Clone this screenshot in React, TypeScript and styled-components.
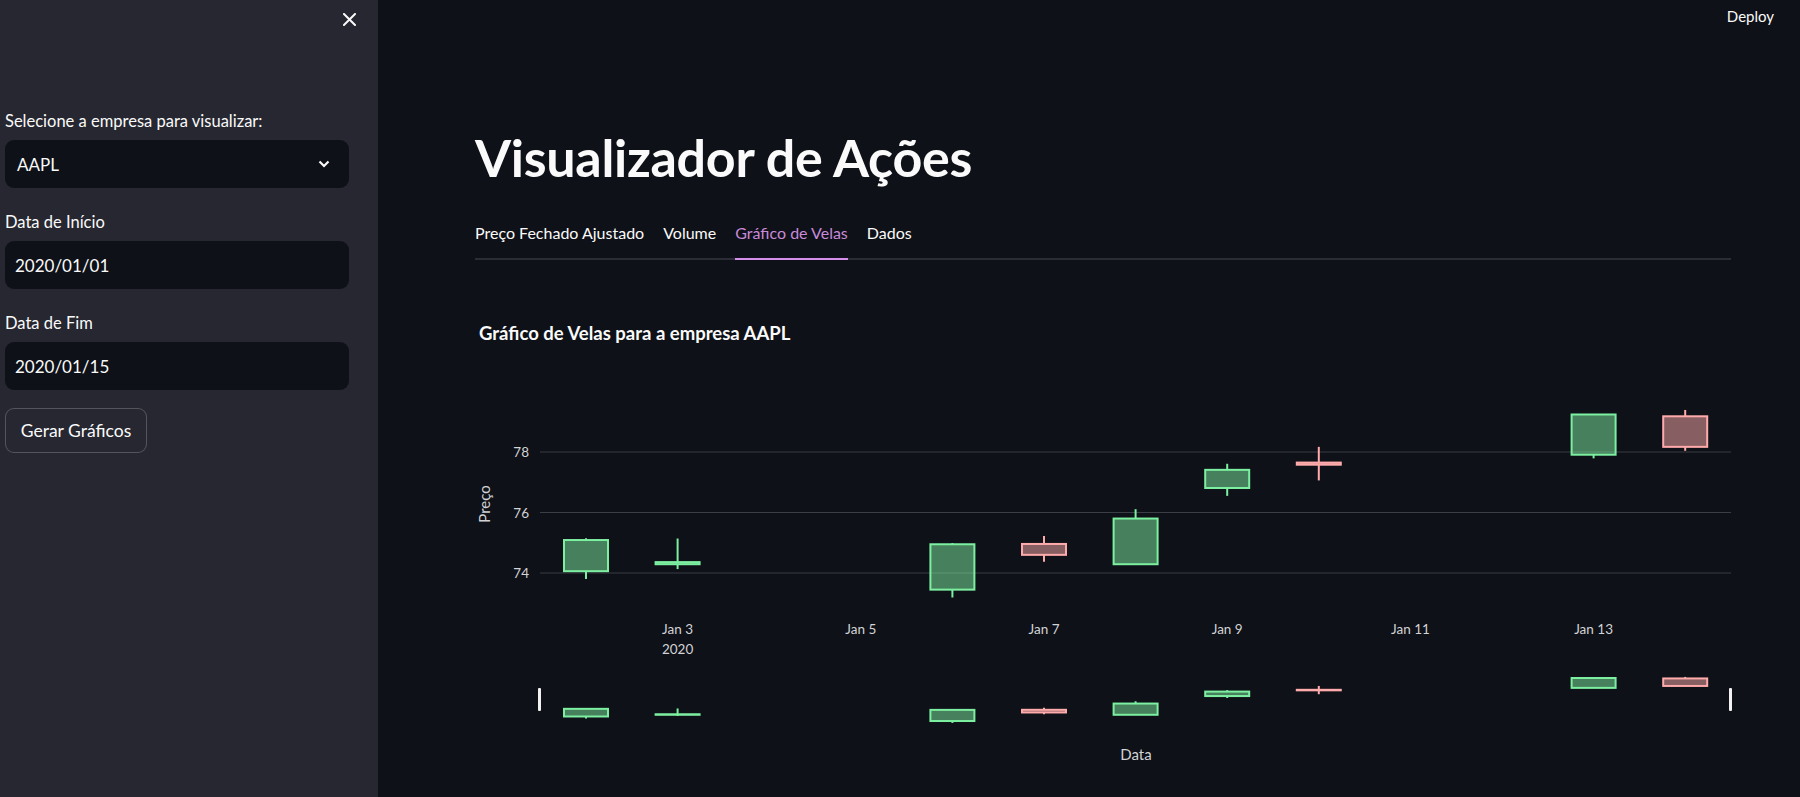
import styled, { createGlobalStyle } from 'styled-components';

interface ICandle {
	d: number;
	o: number;
	h: number;
	l: number;
	c: number;
}

/** AAPL 2020-01-02 .. 2020-01-14, d = days from Jan 2 */
const candles: ICandle[] = [
	{ d: 0, o: 74.06, h: 75.15, l: 73.8, c: 75.09 },
	{ d: 1, o: 74.29, h: 75.14, l: 74.13, c: 74.36 },
	{ d: 4, o: 73.45, h: 74.99, l: 73.19, c: 74.95 },
	{ d: 5, o: 74.96, h: 75.22, l: 74.37, c: 74.6 },
	{ d: 6, o: 74.29, h: 76.11, l: 74.29, c: 75.8 },
	{ d: 7, o: 76.81, h: 77.61, l: 76.55, c: 77.41 },
	{ d: 8, o: 77.65, h: 78.17, l: 77.06, c: 77.58 },
	{ d: 11, o: 77.91, h: 79.27, l: 77.79, c: 79.24 },
	{ d: 12, o: 79.18, h: 79.39, l: 78.04, c: 78.17 },
];

const tabs = ['Preço Fechado Ajustado', 'Volume', 'Gráfico de Velas', 'Dados'];
const xTicks = [
	{ d: 1, label: 'Jan 3' },
	{ d: 3, label: 'Jan 5' },
	{ d: 5, label: 'Jan 7' },
	{ d: 7, label: 'Jan 9' },
	{ d: 9, label: 'Jan 11' },
	{ d: 11, label: 'Jan 13' },
];

const UP = '#7defa1';
const DOWN = '#ffabab';
const CHART_W = 1256;
const CHART_H = 437;
const PLOT_L = 65;

const xOf = (d: number) => 111 + d * 91.6;
const yOf = (p: number) => 92 + (78 - p) * 30.25;
const ySlider = (p: number) => 318 + (79.24 - p) * 7.43;

/** one candle: wicks outside the body, body filled at half opacity */
const CandleMark = ({ candle, y }: { candle: ICandle; y: (p: number) => number }) => {
	const { d, o, h, l, c } = candle;
	const color = c >= o ? UP : DOWN;
	const cx = xOf(d);
	const top = y(Math.max(o, c));
	const bottom = y(Math.min(o, c));
	return (
		<g>
			{y(h) < top - 1 && <line x1={cx} x2={cx} y1={y(h)} y2={top} stroke={color} strokeWidth={2} />}
			{y(l) > bottom + 1 && <line x1={cx} x2={cx} y1={bottom} y2={y(l)} stroke={color} strokeWidth={2} />}
			<rect
				x={cx - 22}
				y={top}
				width={44}
				height={Math.max(bottom - top, 0.5)}
				fill={color}
				fillOpacity={0.5}
				stroke={color}
				strokeWidth={2}
			/>
		</g>
	);
};

const CandleChart = () => (
	<ChartSvg width={CHART_W} height={CHART_H} viewBox={`0 0 ${CHART_W} ${CHART_H}`}>
		{[74, 76, 78].map((p) => (
			<g key={p}>
				<line x1={PLOT_L} x2={CHART_W} y1={yOf(p)} y2={yOf(p)} stroke="#3b3d47" strokeWidth={1} />
				<TickText x={54} y={yOf(p) + 5} textAnchor="end">
					{p}
				</TickText>
			</g>
		))}
		<AxisTitle x={11} y={144} transform="rotate(-90 11 144)" textAnchor="middle" dominantBaseline="middle">
			Preço
		</AxisTitle>
		{candles.map((candle) => (
			<CandleMark key={candle.d} candle={candle} y={yOf} />
		))}
		{xTicks.map((t) => (
			<TickText key={t.d} x={xOf(t.d)} y={274} textAnchor="middle">
				{t.label}
			</TickText>
		))}
		<TickText x={xOf(1)} y={294} textAnchor="middle">
			2020
		</TickText>

		{/* range slider */}
		{candles.map((candle) => (
			<CandleMark key={candle.d} candle={candle} y={ySlider} />
		))}
		<rect x={63} y={328} width={3} height={23} rx={1} fill="#f2f2f2" />
		<rect x={1254} y={328} width={3} height={23} rx={1} fill="#f2f2f2" />
		<AxisTitle x={661} y={400} textAnchor="middle">
			Data
		</AxisTitle>
	</ChartSvg>
);

const App = () => {
	return (
		<>
			<GlobalStyle />
			<Page>
				<Sidebar>
					<SidebarTop>
						<CloseButton aria-label="close">
							<svg width="13" height="13" viewBox="0 0 13 13">
								<path d="M1 1L12 12M12 1L1 12" stroke="#fafafa" strokeWidth="2" strokeLinecap="square" />
							</svg>
						</CloseButton>
					</SidebarTop>
					<Form>
						<Field>
							<Label>Selecione a empresa para visualizar:</Label>
							<SelectBox>
								<span>AAPL</span>
								<svg width="12" height="8" viewBox="0 0 12 8">
									<path d="M1.5 1.5L6 6L10.5 1.5" stroke="#fafafa" strokeWidth="2.2" fill="none" />
								</svg>
							</SelectBox>
						</Field>
						<Field>
							<Label>Data de Início</Label>
							<DateInput>2020/01/01</DateInput>
						</Field>
						<Field>
							<Label>Data de Fim</Label>
							<DateInput>2020/01/15</DateInput>
						</Field>
						<Button>Gerar Gráficos</Button>
					</Form>
				</Sidebar>
				<Main>
					<Header>
						<Deploy>Deploy</Deploy>
					</Header>
					<Content>
						<Title>Visualizador de Ações</Title>
						<TabList>
							{tabs.map((tab) => (
								<Tab key={tab} $active={tab === 'Gráfico de Velas'}>
									{tab}
								</Tab>
							))}
						</TabList>
						<ChartTitle>Gráfico de Velas para a empresa AAPL</ChartTitle>
						<CandleChart />
					</Content>
				</Main>
			</Page>
		</>
	);
};

export default App;

const GlobalStyle = createGlobalStyle`
	html, body {
		margin: 0;
		padding: 0;
		height: 100%;
		overflow: hidden;
		background: #0e1117;
		font-family: Lato, 'Noto Sans', sans-serif;
		color: #fafafa;
	}
	* {
		box-sizing: border-box;
	}
`;

const Page = styled.div`
	display: flex;
	height: 100vh;
`;

const Sidebar = styled.aside`
	width: 378px;
	flex-shrink: 0;
	background: #262730;
	padding: 0 29px 0 5px;
	display: flex;
	flex-direction: column;
`;

const SidebarTop = styled.div`
	height: 38px;
	display: flex;
	justify-content: flex-end;
	align-items: center;
`;

const CloseButton = styled.div`
	display: flex;
	margin-right: -7px;
`;

const Form = styled.div`
	margin-top: 72px;
	display: flex;
	flex-direction: column;
	gap: 23px;
`;

const Field = styled.div`
	display: flex;
	flex-direction: column;
	gap: 8px;
`;

const Label = styled.label`
	font-size: 16.5px;
	line-height: 22px;
	color: #fafafa;
`;

const InputBase = styled.div`
	height: 48px;
	border-radius: 9px;
	background: #0e1117;
	display: flex;
	align-items: center;
	font-size: 17px;
	color: #fafafa;
`;

const SelectBox = styled(InputBase)`
	justify-content: space-between;
	padding: 0 19px 0 12px;
`;

const DateInput = styled(InputBase)`
	padding: 0 10px;
`;

const Button = styled.button`
	align-self: flex-start;
	margin-top: -5px;
	height: 45px;
	width: 142px;
	border-radius: 9px;
	border: 1px solid rgba(250, 250, 250, 0.22);
	background: #262730;
	color: #fafafa;
	font-family: inherit;
	font-size: 17.5px;
	cursor: pointer;
`;

const Main = styled.main`
	flex: 1;
	display: flex;
	flex-direction: column;
	min-width: 0;
`;

const Header = styled.div`
	height: 32px;
	display: flex;
	justify-content: flex-end;
	align-items: center;
	padding-right: 26px;
`;

const Deploy = styled.span`
	font-size: 15px;
	color: #fafafa;
`;

const Content = styled.div`
	padding: 0 69px 0 97px;
	display: flex;
	flex-direction: column;
`;

const Title = styled.h1`
	margin: 94px 0 0;
	font-size: 52px;
	line-height: 63px;
	font-weight: 700;
	letter-spacing: -0.3px;
`;

const TabList = styled.div`
	margin-top: 23px;
	display: flex;
	gap: 19px;
	border-bottom: 2px solid #2b2d36;
`;

const Tab = styled.div<{ $active?: boolean }>`
	height: 48px;
	padding-bottom: 6px;
	display: flex;
	align-items: center;
	font-size: 16px;
	margin-bottom: -2px;
	border-bottom: 2px solid ${({ $active }) => ($active ? '#d68fea' : 'transparent')};
	color: ${({ $active }) => ($active ? '#c88ad8' : '#fafafa')};
`;

const ChartTitle = styled.div`
	margin: 61px 0 0 4px;
	font-size: 18.5px;
	line-height: 24px;
	font-weight: 700;
`;

const ChartSvg = styled.svg`
	display: block;
	margin-top: 15px;
	overflow: visible;
`;

const TickText = styled.text`
	font-family: Lato, 'Noto Sans', sans-serif;
	font-size: 13.5px;
	fill: #d2d3d6;
`;

const AxisTitle = styled.text`
	font-family: Lato, 'Noto Sans', sans-serif;
	font-size: 15px;
	fill: #d2d3d6;
`;
